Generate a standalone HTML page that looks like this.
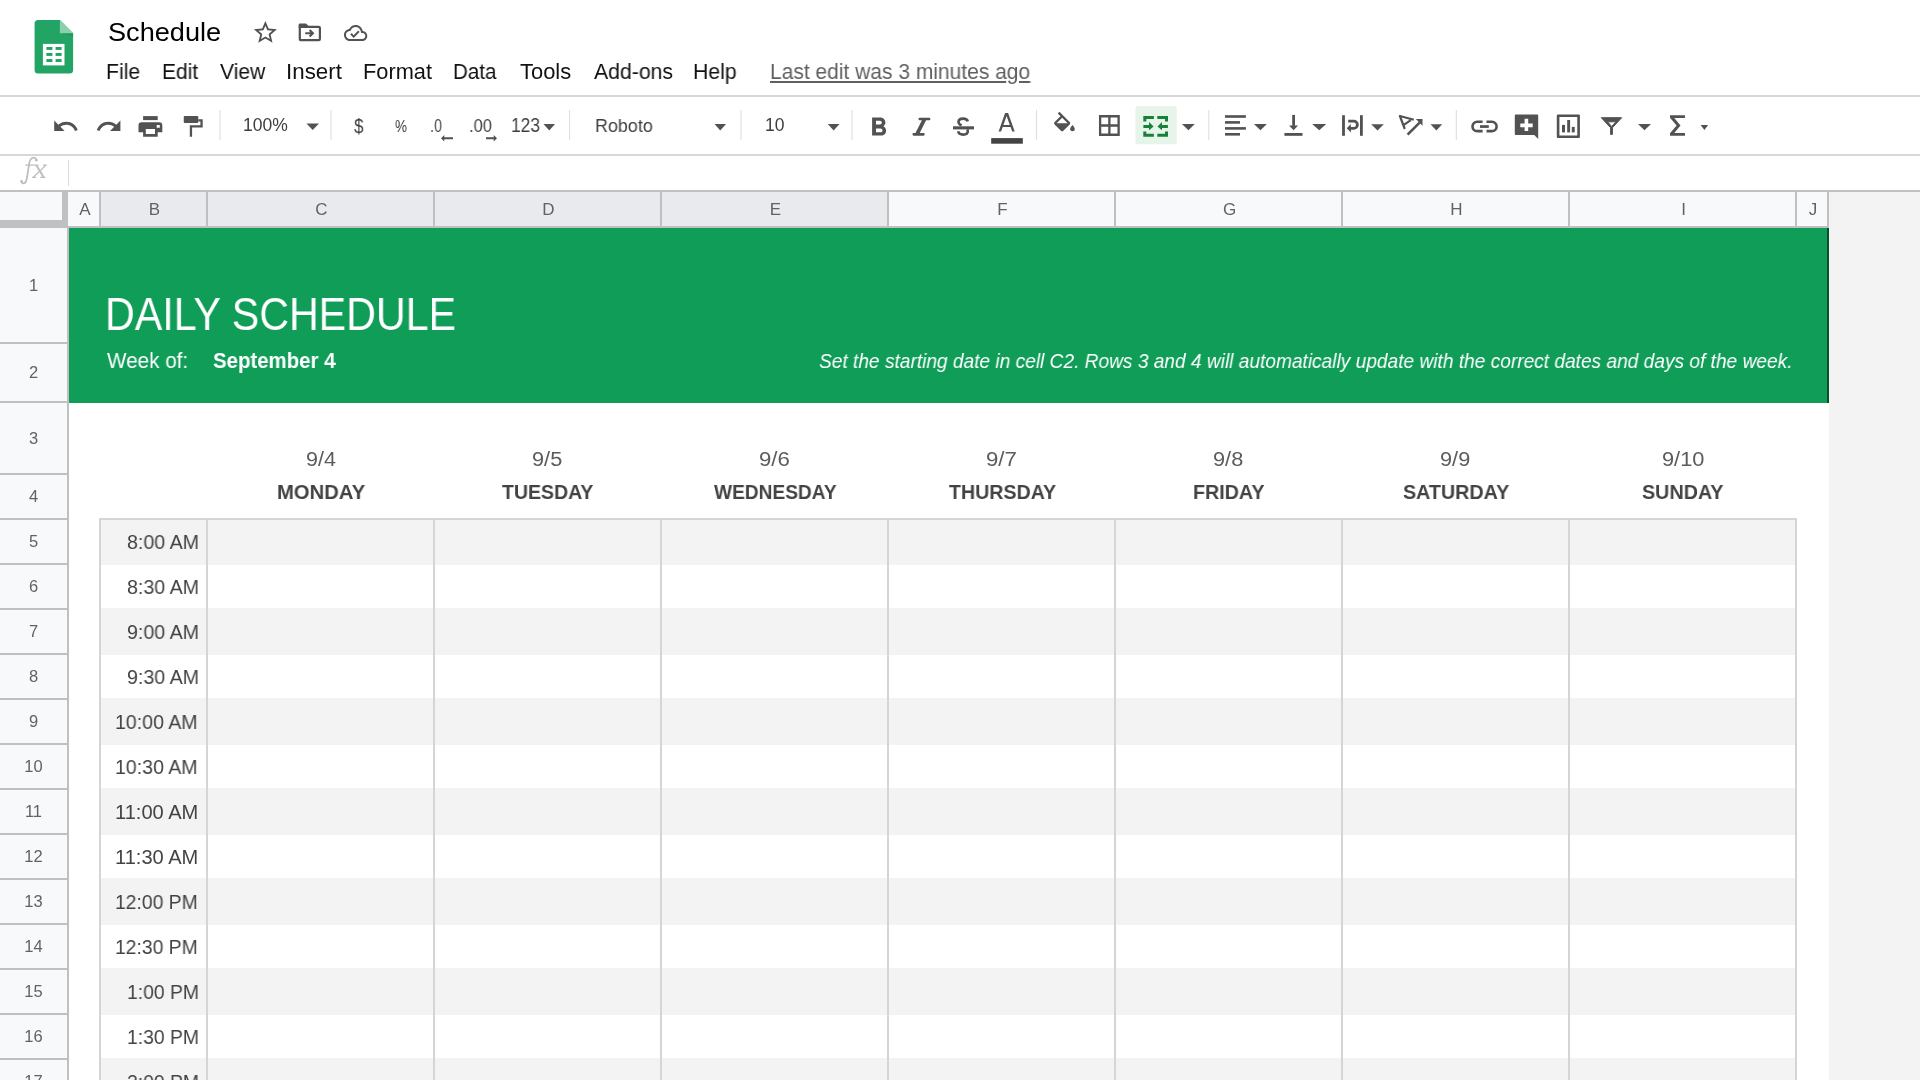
<!DOCTYPE html><html><head><meta charset="utf-8"><style>
html,body{margin:0;padding:0;width:1920px;height:1080px;overflow:hidden;background:#fff;font-family:"Liberation Sans",sans-serif;}
.a{position:absolute;}
.t{position:absolute;white-space:nowrap;transform-origin:0 0;will-change:transform;}
.a{will-change:transform;}
</style></head><body>
<div class="a" style="left:1829px;top:192px;width:91px;height:888px;background:#f3f3f3"></div>
<div class="a" style="left:0;top:192px;width:1829px;height:35px;background:#f8f9fa"></div>
<div class="a" style="left:101px;top:192px;width:787px;height:35px;background:#e8eaed"></div>
<div class="a" style="left:0;top:228px;width:67px;height:852px;background:#f8f9fa"></div>
<div class="a" style="left:69px;top:228px;width:1758px;height:175px;background:#0f9d58"></div>
<div class="a" style="left:1827px;top:228px;width:2px;height:175px;background:#0b4d2c"></div>
<div class="a" style="left:101px;top:518px;width:1695px;height:47px;background:#f3f3f3"></div>
<div class="a" style="left:101px;top:608px;width:1695px;height:47px;background:#f3f3f3"></div>
<div class="a" style="left:101px;top:698px;width:1695px;height:47px;background:#f3f3f3"></div>
<div class="a" style="left:101px;top:788px;width:1695px;height:47px;background:#f3f3f3"></div>
<div class="a" style="left:101px;top:878px;width:1695px;height:47px;background:#f3f3f3"></div>
<div class="a" style="left:101px;top:968px;width:1695px;height:47px;background:#f3f3f3"></div>
<div class="a" style="left:101px;top:1058px;width:1695px;height:47px;background:#f3f3f3"></div>
<div class="a" style="left:99px;top:518px;width:1698px;height:2px;background:#d5d5d5"></div>
<div class="a" style="left:99px;top:518px;width:2px;height:562px;background:#d5d5d5"></div>
<div class="a" style="left:206px;top:518px;width:2px;height:562px;background:#d5d5d5"></div>
<div class="a" style="left:433px;top:518px;width:2px;height:562px;background:#d5d5d5"></div>
<div class="a" style="left:660px;top:518px;width:2px;height:562px;background:#d5d5d5"></div>
<div class="a" style="left:887px;top:518px;width:2px;height:562px;background:#d5d5d5"></div>
<div class="a" style="left:1114px;top:518px;width:2px;height:562px;background:#d5d5d5"></div>
<div class="a" style="left:1341px;top:518px;width:2px;height:562px;background:#d5d5d5"></div>
<div class="a" style="left:1568px;top:518px;width:2px;height:562px;background:#d5d5d5"></div>
<div class="a" style="left:1795px;top:518px;width:2px;height:562px;background:#d5d5d5"></div>
<div class="a" style="left:0;top:95px;width:1920px;height:2px;background:#d7d7d7"></div>
<div class="a" style="left:0;top:154px;width:1920px;height:2px;background:#d7d7d7"></div>
<div class="a" style="left:68px;top:160px;width:1px;height:26px;background:#dadce0"></div>
<div class="a" style="left:0;top:190px;width:1920px;height:2px;background:#c0c0c0"></div>
<div class="a" style="left:68px;top:226px;width:1761px;height:2px;background:#c0c0c0"></div>
<div class="a" style="left:99px;top:192px;width:2px;height:35px;background:#c0c0c0"></div>
<div class="a" style="left:206px;top:192px;width:2px;height:35px;background:#c0c0c0"></div>
<div class="a" style="left:433px;top:192px;width:2px;height:35px;background:#c0c0c0"></div>
<div class="a" style="left:660px;top:192px;width:2px;height:35px;background:#c0c0c0"></div>
<div class="a" style="left:887px;top:192px;width:2px;height:35px;background:#c0c0c0"></div>
<div class="a" style="left:1114px;top:192px;width:2px;height:35px;background:#c0c0c0"></div>
<div class="a" style="left:1341px;top:192px;width:2px;height:35px;background:#c0c0c0"></div>
<div class="a" style="left:1568px;top:192px;width:2px;height:35px;background:#c0c0c0"></div>
<div class="a" style="left:1795px;top:192px;width:2px;height:35px;background:#c0c0c0"></div>
<div class="a" style="left:1827px;top:192px;width:2px;height:35px;background:#c0c0c0"></div>
<div class="a" style="left:62px;top:192px;width:6px;height:36px;background:#c0c0c0"></div>
<div class="a" style="left:0;top:220px;width:68px;height:8px;background:#c0c0c0"></div>
<div class="a" style="left:67px;top:228px;width:2px;height:852px;background:#c0c0c0"></div>
<div class="a" style="left:0;top:342px;width:67px;height:2px;background:#c0c0c0"></div>
<div class="a" style="left:0;top:401px;width:67px;height:2px;background:#c0c0c0"></div>
<div class="a" style="left:0;top:473px;width:67px;height:2px;background:#c0c0c0"></div>
<div class="a" style="left:0;top:518px;width:67px;height:2px;background:#c0c0c0"></div>
<div class="a" style="left:0;top:563px;width:67px;height:2px;background:#c0c0c0"></div>
<div class="a" style="left:0;top:608px;width:67px;height:2px;background:#c0c0c0"></div>
<div class="a" style="left:0;top:653px;width:67px;height:2px;background:#c0c0c0"></div>
<div class="a" style="left:0;top:698px;width:67px;height:2px;background:#c0c0c0"></div>
<div class="a" style="left:0;top:743px;width:67px;height:2px;background:#c0c0c0"></div>
<div class="a" style="left:0;top:788px;width:67px;height:2px;background:#c0c0c0"></div>
<div class="a" style="left:0;top:833px;width:67px;height:2px;background:#c0c0c0"></div>
<div class="a" style="left:0;top:878px;width:67px;height:2px;background:#c0c0c0"></div>
<div class="a" style="left:0;top:923px;width:67px;height:2px;background:#c0c0c0"></div>
<div class="a" style="left:0;top:968px;width:67px;height:2px;background:#c0c0c0"></div>
<div class="a" style="left:0;top:1013px;width:67px;height:2px;background:#c0c0c0"></div>
<div class="a" style="left:0;top:1058px;width:67px;height:2px;background:#c0c0c0"></div>
<div class="a" style="left:0;top:1103px;width:67px;height:2px;background:#c0c0c0"></div>
<div class="a" style="left:69px;top:193px;width:32px;height:34px;line-height:34px;text-align:center;font-size:17px;color:#5f6368">A</div>
<div class="a" style="left:101px;top:193px;width:107px;height:34px;line-height:34px;text-align:center;font-size:17px;color:#5f6368">B</div>
<div class="a" style="left:208px;top:193px;width:227px;height:34px;line-height:34px;text-align:center;font-size:17px;color:#5f6368">C</div>
<div class="a" style="left:435px;top:193px;width:227px;height:34px;line-height:34px;text-align:center;font-size:17px;color:#5f6368">D</div>
<div class="a" style="left:662px;top:193px;width:227px;height:34px;line-height:34px;text-align:center;font-size:17px;color:#5f6368">E</div>
<div class="a" style="left:889px;top:193px;width:227px;height:34px;line-height:34px;text-align:center;font-size:17px;color:#5f6368">F</div>
<div class="a" style="left:1116px;top:193px;width:227px;height:34px;line-height:34px;text-align:center;font-size:17px;color:#5f6368">G</div>
<div class="a" style="left:1343px;top:193px;width:227px;height:34px;line-height:34px;text-align:center;font-size:17px;color:#5f6368">H</div>
<div class="a" style="left:1570px;top:193px;width:227px;height:34px;line-height:34px;text-align:center;font-size:17px;color:#5f6368">I</div>
<div class="a" style="left:1797px;top:193px;width:32px;height:34px;line-height:34px;text-align:center;font-size:17px;color:#5f6368">J</div>
<div class="a" style="left:0;top:228px;width:67px;height:115px;line-height:115px;text-align:center;font-size:16.5px;color:#5f6368">1</div>
<div class="a" style="left:0;top:343px;width:67px;height:59px;line-height:59px;text-align:center;font-size:16.5px;color:#5f6368">2</div>
<div class="a" style="left:0;top:402px;width:67px;height:72px;line-height:72px;text-align:center;font-size:16.5px;color:#5f6368">3</div>
<div class="a" style="left:0;top:474px;width:67px;height:45px;line-height:45px;text-align:center;font-size:16.5px;color:#5f6368">4</div>
<div class="a" style="left:0;top:519px;width:67px;height:45px;line-height:45px;text-align:center;font-size:16.5px;color:#5f6368">5</div>
<div class="a" style="left:0;top:564px;width:67px;height:45px;line-height:45px;text-align:center;font-size:16.5px;color:#5f6368">6</div>
<div class="a" style="left:0;top:609px;width:67px;height:45px;line-height:45px;text-align:center;font-size:16.5px;color:#5f6368">7</div>
<div class="a" style="left:0;top:654px;width:67px;height:45px;line-height:45px;text-align:center;font-size:16.5px;color:#5f6368">8</div>
<div class="a" style="left:0;top:699px;width:67px;height:45px;line-height:45px;text-align:center;font-size:16.5px;color:#5f6368">9</div>
<div class="a" style="left:0;top:744px;width:67px;height:45px;line-height:45px;text-align:center;font-size:16.5px;color:#5f6368">10</div>
<div class="a" style="left:0;top:789px;width:67px;height:45px;line-height:45px;text-align:center;font-size:16.5px;color:#5f6368">11</div>
<div class="a" style="left:0;top:834px;width:67px;height:45px;line-height:45px;text-align:center;font-size:16.5px;color:#5f6368">12</div>
<div class="a" style="left:0;top:879px;width:67px;height:45px;line-height:45px;text-align:center;font-size:16.5px;color:#5f6368">13</div>
<div class="a" style="left:0;top:924px;width:67px;height:45px;line-height:45px;text-align:center;font-size:16.5px;color:#5f6368">14</div>
<div class="a" style="left:0;top:969px;width:67px;height:45px;line-height:45px;text-align:center;font-size:16.5px;color:#5f6368">15</div>
<div class="a" style="left:0;top:1014px;width:67px;height:45px;line-height:45px;text-align:center;font-size:16.5px;color:#5f6368">16</div>
<div class="a" style="left:0;top:1059px;width:67px;height:45px;line-height:45px;text-align:center;font-size:16.5px;color:#5f6368">17</div>
<div id="title" class="t" style="left:108.17px;top:15.52px;font-size:26.5px;line-height:32px;color:#000000;font-weight:normal;font-style:normal;font-family:'Liberation Sans', sans-serif;transform:scaleX(1.0239);">Schedule</div>
<div id="menu0" class="t" style="left:105.78px;top:58.55px;font-size:21.5px;line-height:26px;color:#111111;font-weight:normal;font-style:normal;font-family:'Liberation Sans', sans-serif;transform:scaleX(0.9834);">File</div>
<div id="menu1" class="t" style="left:162.24px;top:58.55px;font-size:21.5px;line-height:26px;color:#111111;font-weight:normal;font-style:normal;font-family:'Liberation Sans', sans-serif;transform:scaleX(0.9782);">Edit</div>
<div id="menu2" class="t" style="left:220.21px;top:58.55px;font-size:21.5px;line-height:26px;color:#111111;font-weight:normal;font-style:normal;font-family:'Liberation Sans', sans-serif;transform:scaleX(0.9787);">View</div>
<div id="menu3" class="t" style="left:285.92px;top:58.55px;font-size:21.5px;line-height:26px;color:#111111;font-weight:normal;font-style:normal;font-family:'Liberation Sans', sans-serif;transform:scaleX(1.0388);">Insert</div>
<div id="menu4" class="t" style="left:362.75px;top:58.55px;font-size:21.5px;line-height:26px;color:#111111;font-weight:normal;font-style:normal;font-family:'Liberation Sans', sans-serif;transform:scaleX(1.0126);">Format</div>
<div id="menu5" class="t" style="left:453.04px;top:58.55px;font-size:21.5px;line-height:26px;color:#111111;font-weight:normal;font-style:normal;font-family:'Liberation Sans', sans-serif;transform:scaleX(0.9561);">Data</div>
<div id="menu6" class="t" style="left:520.00px;top:58.55px;font-size:21.5px;line-height:26px;color:#111111;font-weight:normal;font-style:normal;font-family:'Liberation Sans', sans-serif;transform:scaleX(1.0200);">Tools</div>
<div id="menu7" class="t" style="left:593.69px;top:58.55px;font-size:21.5px;line-height:26px;color:#111111;font-weight:normal;font-style:normal;font-family:'Liberation Sans', sans-serif;transform:scaleX(0.9877);">Add-ons</div>
<div id="menu8" class="t" style="left:693.49px;top:58.55px;font-size:21.5px;line-height:26px;color:#111111;font-weight:normal;font-style:normal;font-family:'Liberation Sans', sans-serif;transform:scaleX(0.9864);">Help</div>
<div id="lastedit" class="t" style="left:770.00px;top:59.05px;font-size:21.5px;line-height:26px;color:#606060;font-weight:normal;font-style:normal;font-family:'Liberation Sans', sans-serif;transform:scaleX(0.9760);text-decoration:underline;text-underline-offset:2px;">Last edit was 3 minutes ago</div>
<div id="zoom" class="t" style="left:243.11px;top:114.74px;font-size:17.5px;line-height:21px;color:#3c4043;font-weight:normal;font-style:normal;font-family:'Liberation Sans', sans-serif;transform:scaleX(0.9911);">100%</div>
<div id="dollar" class="t" style="left:354.00px;top:112.90px;font-size:20.5px;line-height:25px;color:#3c4043;font-weight:normal;font-style:normal;font-family:'Liberation Sans', sans-serif;transform:scaleX(0.8389);">$</div>
<div id="pct" class="t" style="left:394.57px;top:116.61px;font-size:17px;line-height:20px;color:#3c4043;font-weight:normal;font-style:normal;font-family:'Liberation Sans', sans-serif;transform:scaleX(0.7963);">%</div>
<div id="dec0" class="t" style="left:429.79px;top:115.26px;font-size:18px;line-height:22px;color:#3c4043;font-weight:normal;font-style:normal;font-family:'Liberation Sans', sans-serif;transform:scaleX(0.8031);">.0</div>
<div id="dec00" class="t" style="left:469.43px;top:115.26px;font-size:18px;line-height:22px;color:#3c4043;font-weight:normal;font-style:normal;font-family:'Liberation Sans', sans-serif;transform:scaleX(0.9193);">.00</div>
<div id="n123" class="t" style="left:510.62px;top:114.24px;font-size:19.5px;line-height:23px;color:#3c4043;font-weight:normal;font-style:normal;font-family:'Liberation Sans', sans-serif;transform:scaleX(0.8905);">123</div>
<div id="font" class="t" style="left:595.27px;top:113.92px;font-size:19px;line-height:23px;color:#3c4043;font-weight:normal;font-style:normal;font-family:'Liberation Sans', sans-serif;transform:scaleX(0.9435);">Roboto</div>
<div id="fsz" class="t" style="left:765.00px;top:114.74px;font-size:17.5px;line-height:21px;color:#3c4043;font-weight:normal;font-style:normal;font-family:'Liberation Sans', sans-serif;">10</div>
<div id="daily" class="t" style="left:104.53px;top:286.56px;font-size:46px;line-height:55px;color:#ffffff;font-weight:normal;font-style:normal;font-family:'Liberation Sans', sans-serif;transform:scaleX(0.8956);">DAILY SCHEDULE</div>
<div id="weekof" class="t" style="left:107.20px;top:348.25px;font-size:21.8px;line-height:26px;color:#ffffff;font-weight:normal;font-style:normal;font-family:'Liberation Sans', sans-serif;transform:scaleX(0.9478);">Week of:</div>
<div id="sept" class="t" style="left:213.21px;top:348.25px;font-size:21.8px;line-height:26px;color:#ffffff;font-weight:bold;font-style:normal;font-family:'Liberation Sans', sans-serif;transform:scaleX(0.9359);">September 4</div>
<div id="note" class="t" style="left:818.77px;top:348.22px;font-size:21px;line-height:25px;color:#ffffff;font-weight:normal;font-style:italic;font-family:'Liberation Sans', sans-serif;transform:scaleX(0.9104);">Set the starting date in cell C2. Rows 3 and 4 will automatically update with the correct dates and days of the week.</div>
<div id="date0" class="t" style="left:305.80px;top:448.44px;font-size:19.5px;line-height:23px;color:#5c5c5c;font-weight:normal;font-style:normal;font-family:'Liberation Sans', sans-serif;transform:scaleX(1.1054);">9/4</div>
<div id="day0" class="t" style="left:276.68px;top:478.99px;font-size:20.8px;line-height:25px;color:#434343;font-weight:bold;font-style:normal;font-family:'Liberation Sans', sans-serif;transform:scaleX(0.9731);">MONDAY</div>
<div id="date1" class="t" style="left:532.26px;top:448.44px;font-size:19.5px;line-height:23px;color:#5c5c5c;font-weight:normal;font-style:normal;font-family:'Liberation Sans', sans-serif;transform:scaleX(1.1154);">9/5</div>
<div id="day1" class="t" style="left:502.32px;top:478.99px;font-size:20.8px;line-height:25px;color:#434343;font-weight:bold;font-style:normal;font-family:'Liberation Sans', sans-serif;transform:scaleX(0.9381);">TUESDAY</div>
<div id="date2" class="t" style="left:759.33px;top:448.44px;font-size:19.5px;line-height:23px;color:#5c5c5c;font-weight:normal;font-style:normal;font-family:'Liberation Sans', sans-serif;transform:scaleX(1.1391);">9/6</div>
<div id="day2" class="t" style="left:713.69px;top:478.99px;font-size:20.8px;line-height:25px;color:#434343;font-weight:bold;font-style:normal;font-family:'Liberation Sans', sans-serif;transform:scaleX(0.9194);">WEDNESDAY</div>
<div id="date3" class="t" style="left:986.33px;top:448.44px;font-size:19.5px;line-height:23px;color:#5c5c5c;font-weight:normal;font-style:normal;font-family:'Liberation Sans', sans-serif;transform:scaleX(1.1391);">9/7</div>
<div id="day3" class="t" style="left:948.92px;top:478.99px;font-size:20.8px;line-height:25px;color:#434343;font-weight:bold;font-style:normal;font-family:'Liberation Sans', sans-serif;transform:scaleX(0.9422);">THURSDAY</div>
<div id="date4" class="t" style="left:1213.26px;top:448.44px;font-size:19.5px;line-height:23px;color:#5c5c5c;font-weight:normal;font-style:normal;font-family:'Liberation Sans', sans-serif;transform:scaleX(1.1154);">9/8</div>
<div id="day4" class="t" style="left:1192.61px;top:478.99px;font-size:20.8px;line-height:25px;color:#434343;font-weight:bold;font-style:normal;font-family:'Liberation Sans', sans-serif;transform:scaleX(0.9461);">FRIDAY</div>
<div id="date5" class="t" style="left:1440.26px;top:448.44px;font-size:19.5px;line-height:23px;color:#5c5c5c;font-weight:normal;font-style:normal;font-family:'Liberation Sans', sans-serif;transform:scaleX(1.1154);">9/9</div>
<div id="day5" class="t" style="left:1403.00px;top:478.99px;font-size:20.8px;line-height:25px;color:#434343;font-weight:bold;font-style:normal;font-family:'Liberation Sans', sans-serif;transform:scaleX(0.9483);">SATURDAY</div>
<div id="date6" class="t" style="left:1662.12px;top:448.44px;font-size:19.5px;line-height:23px;color:#5c5c5c;font-weight:normal;font-style:normal;font-family:'Liberation Sans', sans-serif;transform:scaleX(1.1180);">9/10</div>
<div id="day6" class="t" style="left:1642.18px;top:478.99px;font-size:20.8px;line-height:25px;color:#434343;font-weight:bold;font-style:normal;font-family:'Liberation Sans', sans-serif;transform:scaleX(0.9484);">SUNDAY</div>
<div id="time0" class="t" style="left:126.70px;top:529.82px;font-size:20px;line-height:24px;color:#434343;font-weight:normal;font-style:normal;font-family:'Liberation Sans', sans-serif;transform:scaleX(0.9807);">8:00 AM</div>
<div id="time1" class="t" style="left:126.70px;top:574.82px;font-size:20px;line-height:24px;color:#434343;font-weight:normal;font-style:normal;font-family:'Liberation Sans', sans-serif;transform:scaleX(0.9807);">8:30 AM</div>
<div id="time2" class="t" style="left:126.70px;top:619.82px;font-size:20px;line-height:24px;color:#434343;font-weight:normal;font-style:normal;font-family:'Liberation Sans', sans-serif;transform:scaleX(0.9807);">9:00 AM</div>
<div id="time3" class="t" style="left:126.70px;top:664.82px;font-size:20px;line-height:24px;color:#434343;font-weight:normal;font-style:normal;font-family:'Liberation Sans', sans-serif;transform:scaleX(0.9807);">9:30 AM</div>
<div id="time4" class="t" style="left:115.43px;top:709.82px;font-size:20px;line-height:24px;color:#434343;font-weight:normal;font-style:normal;font-family:'Liberation Sans', sans-serif;transform:scaleX(0.9781);">10:00 AM</div>
<div id="time5" class="t" style="left:115.43px;top:754.82px;font-size:20px;line-height:24px;color:#434343;font-weight:normal;font-style:normal;font-family:'Liberation Sans', sans-serif;transform:scaleX(0.9781);">10:30 AM</div>
<div id="time6" class="t" style="left:115.39px;top:799.82px;font-size:20px;line-height:24px;color:#434343;font-weight:normal;font-style:normal;font-family:'Liberation Sans', sans-serif;transform:scaleX(1.0027);">11:00 AM</div>
<div id="time7" class="t" style="left:115.39px;top:844.82px;font-size:20px;line-height:24px;color:#434343;font-weight:normal;font-style:normal;font-family:'Liberation Sans', sans-serif;transform:scaleX(1.0027);">11:30 AM</div>
<div id="time8" class="t" style="left:115.44px;top:889.82px;font-size:20px;line-height:24px;color:#434343;font-weight:normal;font-style:normal;font-family:'Liberation Sans', sans-serif;transform:scaleX(0.9663);">12:00 PM</div>
<div id="time9" class="t" style="left:115.44px;top:934.82px;font-size:20px;line-height:24px;color:#434343;font-weight:normal;font-style:normal;font-family:'Liberation Sans', sans-serif;transform:scaleX(0.9663);">12:30 PM</div>
<div id="time10" class="t" style="left:126.72px;top:979.82px;font-size:20px;line-height:24px;color:#434343;font-weight:normal;font-style:normal;font-family:'Liberation Sans', sans-serif;transform:scaleX(0.9668);">1:00 PM</div>
<div id="time11" class="t" style="left:126.72px;top:1024.82px;font-size:20px;line-height:24px;color:#434343;font-weight:normal;font-style:normal;font-family:'Liberation Sans', sans-serif;transform:scaleX(0.9668);">1:30 PM</div>
<div id="time12" class="t" style="left:126.72px;top:1069.82px;font-size:20px;line-height:24px;color:#434343;font-weight:normal;font-style:normal;font-family:'Liberation Sans', sans-serif;transform:scaleX(0.9668);">2:00 PM</div>
<svg class="a" style="left:0;top:0" width="1920" height="1080" viewBox="0 0 1920 1080"><path d="M34.6 23.5 a3.5 3.5 0 0 1 3.5 -3.5 h21.8 l13.2 13.2 v36.8 a3.5 3.5 0 0 1 -3.5 3.5 h-31.5 a3.5 3.5 0 0 1 -3.5 -3.5z" fill="#21a464"/><path d="M59.9 33.2 h13.2 v3 z" fill="#1c8f56" opacity="0.6"/><path d="M59.9 20 l13.2 13.2 h-13.2z" fill="#8acfae"/><rect x="42.9" y="43.9" width="21.6" height="21.5" fill="#fff"/><rect x="46.4" y="47" width="6" height="2.9" fill="#21a464"/><rect x="55.6" y="47" width="6" height="2.9" fill="#21a464"/><rect x="46.4" y="53" width="6" height="2.9" fill="#21a464"/><rect x="55.6" y="53" width="6" height="2.9" fill="#21a464"/><rect x="46.4" y="59.1" width="6" height="2.9" fill="#21a464"/><rect x="55.6" y="59.1" width="6" height="2.9" fill="#21a464"/><g transform="translate(251.6,18.7) scale(1.15)"><path fill="#525252" d="M22 9.24l-7.19-.62L12 2 9.19 8.63 2 9.24l5.46 4.73L5.82 21 12 17.27 18.18 21l-1.63-7.03L22 9.24zM12 15.4l-3.76 2.27 1-4.28-3.32-2.88 4.38-.38L12 6.1l1.71 4.04 4.38.38-3.32 2.88 1 4.28L12 15.4z"/></g><path fill="none" stroke="#525252" stroke-width="2.2" d="M299.8 25.5 V39 a1.2 1.2 0 0 0 1.2 1.2 H318.7 a1.2 1.2 0 0 0 1.2 -1.2 V28 a1.2 1.2 0 0 0 -1.2 -1.2 H308"/><path fill="#525252" d="M298.7 24.7 a1.2 1.2 0 0 1 1.2 -1.2 H306 L308.4 25.7 V27.9 H298.7z"/><path fill="none" stroke="#525252" stroke-width="2.1" d="M305.3 33.3 H312 M309.6 30 L312.9 33.3 L309.6 36.6"/><g transform="translate(344,21) scale(0.97,1.0)"><path fill="#525252" d="M19.35 10.04C18.67 6.59 15.64 4 12 4 9.11 4 6.6 5.64 5.35 8.04 2.34 8.36 0 10.91 0 14c0 3.31 2.69 6 6 6h13c2.76 0 5-2.24 5-5 0-2.64-2.05-4.78-4.65-4.96zM19 18H6c-2.21 0-4-1.79-4-4 0-2.05 1.53-3.76 3.56-3.97l1.07-.11.5-.95C8.08 7.14 9.94 6 12 6c2.62 0 4.88 1.86 5.39 4.43l.3 1.5 1.53.11c1.56.1 2.78 1.41 2.78 2.96 0 1.65-1.35 3-3 3zm-9-3.82l-2.09-2.09L6.5 13.5 10 17l6.01-6.01-1.41-1.41z"/></g><path fill="none" stroke="#bdbdbd" stroke-width="1.7" stroke-linecap="round" d="M36.6 160.1 C35.8 157.6 33.9 157.4 32.4 158 C30.5 158.8 29.6 161 29.2 163.5 L27 177.5 C26.4 181.6 24.8 183.4 23.3 183.3 C22.2 183.2 21.5 182.3 21.4 181.4"/><circle cx="36.3" cy="160.2" r="1.3" fill="#bdbdbd"/><circle cx="21.6" cy="181.4" r="1.3" fill="#bdbdbd"/><path fill="none" stroke="#bdbdbd" stroke-width="1.2" d="M25.4 165.2 H38.6 M32 177.3 H36.1 M40.2 177.3 H45.3 M43 165.2 H46.8"/><path fill="none" stroke="#bdbdbd" stroke-width="1.9" d="M36.5 165.6 L43.6 177.2"/><path fill="none" stroke="#bdbdbd" stroke-width="1.2" d="M33.4 177.2 L45.8 165.3"/><g transform="translate(51.9,112.55) scale(1.15)"><path fill="#525252" d="M12.5 8c-2.65 0-5.05.99-6.9 2.6L2 7v9h9l-3.62-3.62c1.39-1.16 3.16-1.88 5.12-1.88 3.54 0 6.55 2.31 7.6 5.5l2.37-.78C21.08 11.03 17.15 8 12.5 8z"/></g><g transform="translate(95.1,112.55) scale(1.15)"><path fill="#525252" d="M18.4 10.6C16.55 8.99 14.15 8 11.5 8c-4.65 0-8.58 3.03-9.96 7.22L3.9 16c1.05-3.19 4.05-5.5 7.6-5.5 1.95 0 3.73.72 5.12 1.88L13 16h9V7l-3.6 3.6z"/></g><rect x="143.1" y="116.1" width="14.6" height="4" fill="#525252"/><path fill="#525252" fill-rule="evenodd" d="M141.5 122.2 h17.8 a3 3 0 0 1 3 3 v7 h-4.6 v4.55 h-14.6 v-4.55 h-4.6 v-7 a3 3 0 0 1 3 -3z M145.8 129 v5 h9.2 v-5z M156.7 125 v2.8 h3.1 v-2.8z"/><rect x="183.75" y="116.1" width="14.55" height="6.9" rx="1" fill="#525252"/><path fill="none" stroke="#525252" stroke-width="2.3" d="M198.3 120.4 H201.55 V126.45 H190.95 V136.75"/><rect x="219.5" y="110" width="1" height="30" fill="#dadce0"/><rect x="330.5" y="110" width="1" height="30" fill="#dadce0"/><rect x="569.1" y="110" width="1" height="30" fill="#dadce0"/><rect x="740.5" y="110" width="1" height="30" fill="#dadce0"/><rect x="851.5" y="110" width="1" height="30" fill="#dadce0"/><rect x="1036.1" y="110" width="1" height="30" fill="#dadce0"/><rect x="1208.3" y="110" width="1" height="30" fill="#dadce0"/><rect x="1455.8" y="110" width="1" height="30" fill="#dadce0"/><path fill="#525252" d="M306.4 123.6 H319 L312.7 129.9z"/><path fill="#525252" d="M543.5 124 H555 L549.25 130.5z"/><path fill="#525252" d="M714.5 124 H726 L720.25 130.5z"/><path fill="#525252" d="M827.8 124 H839.5 L833.65 130.5z"/><path fill="#525252" d="M1182 124 H1194.8 L1188.4 130.3z"/><path fill="#525252" d="M1254 124 H1266.9 L1260.45 130.2z"/><path fill="#525252" d="M1312.2 124 H1326.25 L1319.225 130.2z"/><path fill="#525252" d="M1371.2 124.2 H1383.8 L1377.5 130.5z"/><path fill="#525252" d="M1430.5 124.2 H1442.2 L1436.35 130.5z"/><path fill="#525252" d="M1638 124 H1651 L1644.5 130.2z"/><path fill="#525252" d="M1700.6 124.9 H1708.1 L1704.35 129.9z"/><path fill="#525252" d="M441 138.3 l3.3 -3.3 v2.3 h8.7 v2 h-8.7 v2.3z"/><path fill="#525252" d="M497 138.3 l-3.3 -3.3 v2.3 h-7.7 v2 h7.7 v2.3z"/><g transform="translate(863,112.2) scale(1.3)"><path fill="#525252" d="M15.6 10.79c.97-.67 1.65-1.77 1.65-2.79 0-2.26-1.75-4-4-4H7v14h7.04c2.09 0 3.71-1.7 3.71-3.79 0-1.52-.86-2.82-2.1-3.42zM10 6.5h3c.83 0 1.5.67 1.5 1.5s-.67 1.5-1.5 1.5h-3v-3zm3.5 9H10v-3h3.5c.83 0 1.5.67 1.5 1.5s-.67 1.5-1.5 1.5z"/></g><path fill="#525252" d="M919.8 117.7 H929.1 a1.3 1.3 0 0 1 0 2.6 H926.1 L919.7 133 H923.4 a1.35 1.35 0 0 1 0 2.7 H913.8 a1.35 1.35 0 0 1 0 -2.7 H915.5 L921.9 120.3 H919.8 a1.3 1.3 0 0 1 0 -2.6z"/><path fill="none" stroke="#525252" stroke-width="2.6" d="M967.8 121.4 C967.1 119 965.2 118.6 963.1 118.6 C960.2 118.6 958.5 120 958.5 121.9 C958.5 123.4 959.5 124.4 961.6 125.4 M958.2 131.3 C958.6 133.8 960.6 134.6 963.2 134.6 C966.2 134.6 967.8 133.2 967.8 131.3 C967.8 130.6 967.6 130 967.2 129.4"/><rect x="953" y="126.3" width="21" height="3.1" fill="#525252"/><path fill="#525252" d="M1005.1 113 h3 l6.6 18.5 h-2.5 l-1.6 -4.6 h-7.9 l-1.6 4.6 h-2.5z M1006.6 116.1 l-3.2 8.8 h6.4z"/><rect x="991.2" y="138.1" width="31.6" height="5.6" fill="#434343"/><g transform="translate(1050.65,111.8) scale(1.15)"><path fill="#525252" d="M16.56 8.94L7.62 0 6.21 1.41l2.38 2.38-5.15 5.15c-.59.59-.59 1.54 0 2.12l5.5 5.5c.29.29.68.44 1.06.44s.77-.15 1.06-.44l5.5-5.5c.59-.58.59-1.53 0-2.12zM5.21 10L10 5.21 14.79 10H5.21zM19 11.5s-2 2.17-2 3.5c0 1.1.9 2 2 2s2-.9 2-2c0-1.33-2-3.5-2-3.5z"/></g><g transform="translate(1095.5,111.6) scale(1.156)"><path fill="#525252" d="M3 3v18h18V3H3zm8 16H5v-6h6v6zm0-8H5V5h6v6zm8 8h-6v-6h6v6zm0-8h-6V5h6v6z"/></g><rect x="1135.5" y="106.3" width="41.2" height="37.9" rx="1.5" fill="#e6f4ea"/><path fill="none" stroke="#188038" stroke-width="3" d="M1144.8 121.6 V117.4 H1153.9 M1157.3 117.4 H1166.5 V121.6 M1144.8 131.4 V135.3 H1153.9 M1157.3 135.3 H1166.5 V131.4 M1143.4 126.4 H1151 M1160 126.4 H1167.9"/><path fill="#188038" d="M1149 122 L1153.6 126.4 L1149 130.3z M1162 122 L1157.5 126.4 L1162 130.3z"/><rect x="1225" y="115.2" width="20.9" height="2.6" fill="#525252"/><rect x="1225" y="121.1" width="15" height="2.6" fill="#525252"/><rect x="1225" y="127.1" width="20.9" height="2.6" fill="#525252"/><rect x="1225" y="133" width="15" height="2.6" fill="#525252"/><rect x="1292.2" y="114.9" width="2.8" height="11" fill="#525252"/><path fill="#525252" d="M1289 125.5 H1298.1 L1293.6 130.2z"/><rect x="1284.4" y="133" width="18.1" height="2.8" fill="#525252"/><rect x="1342.1" y="115.2" width="2.8" height="20.6" fill="#525252"/><rect x="1360" y="115.2" width="2.8" height="20.6" fill="#525252"/><path fill="none" stroke="#525252" stroke-width="2.8" d="M1348.2 121.1 H1353.8 A3.6 3.6 0 0 1 1353.8 128.3 H1349.8"/><path fill="#525252" d="M1346.7 128.3 L1350.9 124.1 V132.5z"/><path fill="none" stroke="#525252" stroke-width="2.2" stroke-linejoin="round" d="M1404.8 129 L1399.9 116 L1413.8 119.8 M1404.2 124.6 L1410.8 120.2"/><path fill="none" stroke="#525252" stroke-width="2.6" d="M1407.6 134.6 L1419.6 122.6"/><path fill="#525252" d="M1415.8 119.1 H1422.5 V125.8z"/><path fill="none" stroke="#525252" stroke-width="2.6" d="M1482.6 121.7 H1477.2 A4.7 4.7 0 0 0 1477.2 131.1 H1482.6 M1486.5 121.7 H1491.9 A4.7 4.7 0 0 1 1491.9 131.1 H1486.5"/><rect x="1480" y="125.2" width="8.8" height="2.7" fill="#525252"/><path fill="#525252" fill-rule="evenodd" d="M1515.8 114.5 H1537.2 a1 1 0 0 1 1 1 V138.9 L1534.2 135 H1515.8 a1 1 0 0 1 -1 -1 V115.5 a1 1 0 0 1 1 -1z M1524.6 118.7 V123.6 H1520.3 V127.2 H1524.6 V131.1 H1528.2 V127.2 H1532.7 V123.6 H1528.2 V118.7z"/><path fill="#525252" fill-rule="evenodd" d="M1557.8 114.5 H1578.9 a1 1 0 0 1 1 1 V137 a1 1 0 0 1 -1 1 H1557.8 a1 1 0 0 1 -1 -1 V115.5 a1 1 0 0 1 1 -1z M1559.4 117.1 V135.4 H1577.3 V117.1z"/><rect x="1562" y="124.9" width="3" height="7.5" fill="#525252"/><rect x="1567.2" y="120" width="2.9" height="12.4" fill="#525252"/><rect x="1571.8" y="126.9" width="2.9" height="5.5" fill="#525252"/><path fill="#525252" stroke="#525252" stroke-width="1" stroke-linejoin="round" fill-rule="evenodd" d="M1601.3 117.7 H1621.7 L1612.4 127.8 V134.4 H1610.6 V127.8z M1607.6 121.8 H1616 L1611.6 126.5z"/><path fill="#525252" d="M1670 115.2 H1685 V118 H1674.3 L1680.5 125.5 L1674.3 133 H1685 V135.8 H1670 V133.2 L1676.6 125.5 L1670 117.8z"/></svg>
</body></html>
